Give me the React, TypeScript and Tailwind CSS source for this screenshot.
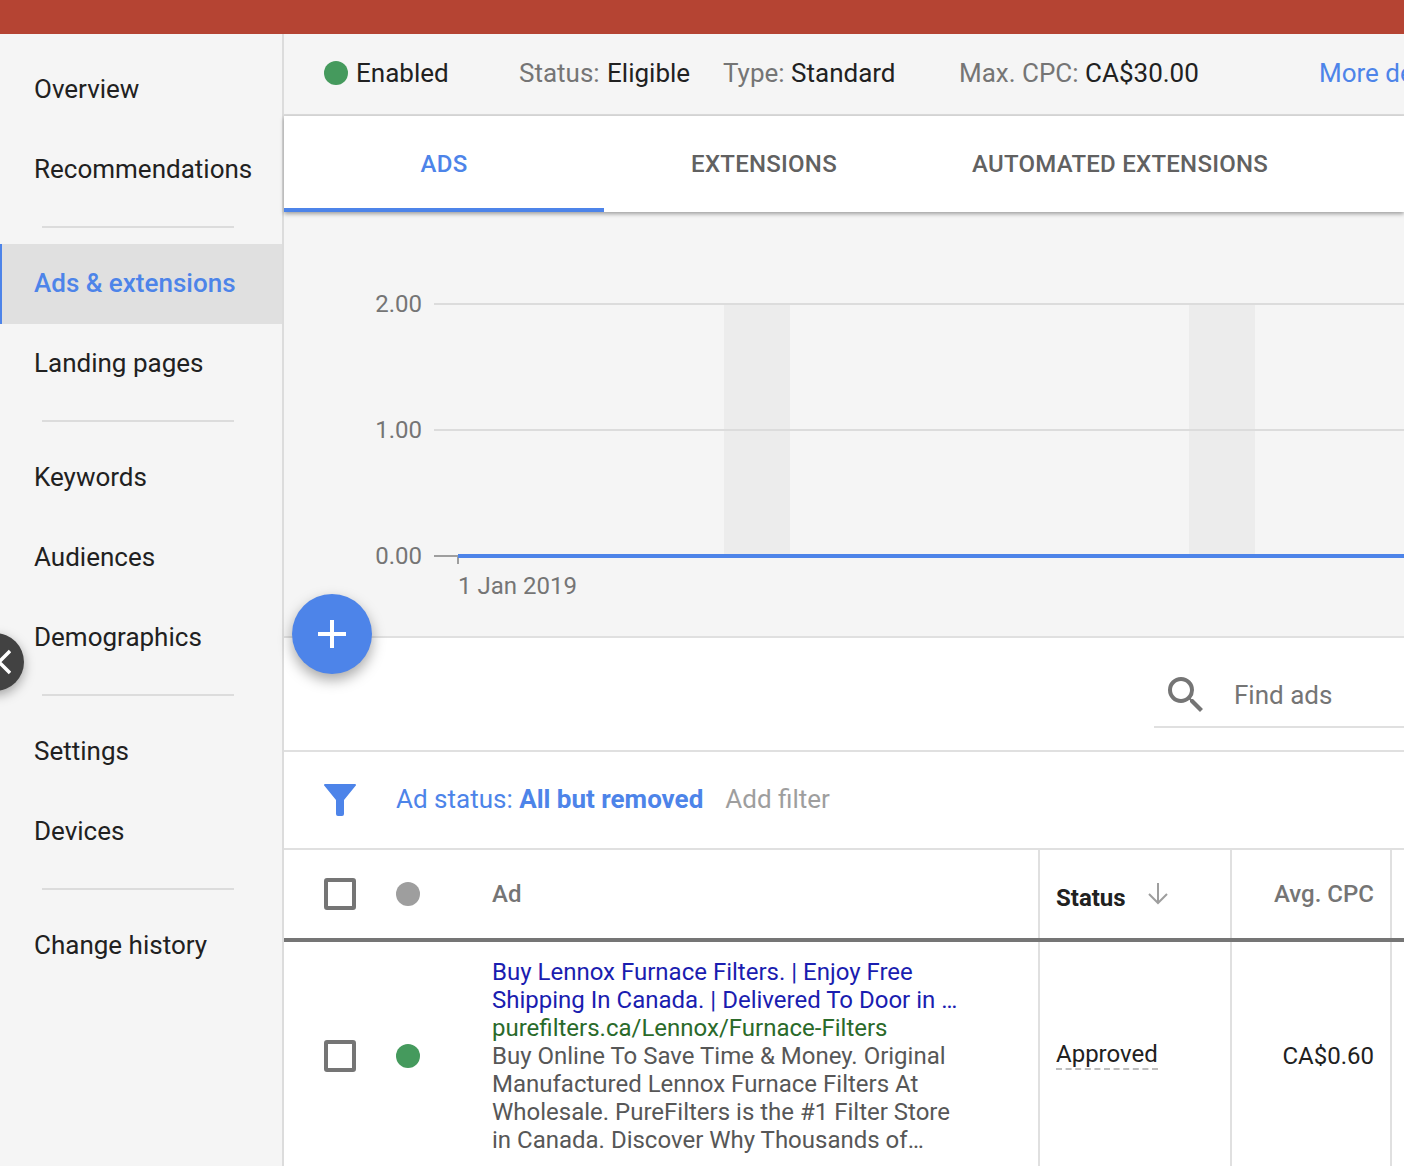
const navGroups = [
  ['Overview', 'Recommendations'],
  ['Ads & extensions', 'Landing pages'],
  ['Keywords', 'Audiences', 'Demographics'],
  ['Settings', 'Devices'],
  ['Change history'],
];

function Sidebar() {
  return (
    <aside className="w-[284px] shrink-0 border-r-2 border-[#dcdcdc] bg-[#f5f5f5] pt-[15px]">
      {navGroups.map((group, i) => (
        <div key={i} className="flex flex-col">
          {group.map((item) => {
            const active = item === 'Ads & extensions';
            return (
              <div
                key={item}
                className={
                  active
                    ? 'mt-px -mb-px flex h-20 items-center border-l-2 border-[#4d84e9] bg-[#e0e0e0] pb-[2px] pl-[32px] font-medium text-[#4d84e9]'
                    : 'flex h-20 items-center pl-[34px] text-[#212121]'
                }
              >
                {item}
              </div>
            );
          })}
          {i < navGroups.length - 1 && (
            <div className="mx-[42px] mb-[15px] mt-[17px] h-[2px] w-[192px] bg-[#dcdcdc]" />
          )}
        </div>
      ))}
    </aside>
  );
}

function StatusBar() {
  return (
    <div className="flex h-[82px] shrink-0 items-center whitespace-nowrap border-b-2 border-[#dcdcdc] pb-[2px] pl-10">
      <span className="h-6 w-6 shrink-0 rounded-full bg-[#459a5d]" />
      <span className="ml-[8px] w-[163px] shrink-0 text-[#212121]">Enabled</span>
      <span className="w-[204px] shrink-0 text-[#757575]">
        Status: <span className="ml-px text-[#212121]">Eligible</span>
      </span>
      <span className="w-[236px] shrink-0 text-[#757575]">
        Type: <span className="text-[#212121]">Standard</span>
      </span>
      <span className="w-[360px] shrink-0 text-[#757575]">
        Max. CPC: <span className="text-[#212121]">CA$30.00</span>
      </span>
      <span className="shrink-0 text-[#4d84e9]">More details</span>
    </div>
  );
}

function Tabs() {
  return (
    <div className="relative z-10 flex h-24 shrink-0 bg-white text-[24px] font-medium tracking-[0.25px] text-[#616161] shadow-[0_2px_4px_rgba(0,0,0,0.35)]">
      <div className="flex w-80 items-center justify-center border-b-4 border-[#4d84e9] pt-1 text-[#4d84e9]">
        ADS
      </div>
      <div className="flex w-80 items-center justify-center border-b-4 border-transparent pt-1">
        EXTENSIONS
      </div>
      <div className="flex items-center justify-center border-b-4 border-transparent px-12 pt-1">
        AUTOMATED EXTENSIONS
      </div>
    </div>
  );
}

function Chart() {
  return (
    <div className="h-[426px] shrink-0 border-b-2 border-[#e0e0e0]">
      <svg width="1120" height="424" className="block">
        <rect x="440" y="92" width="66" height="252" fill="#ececec" />
        <rect x="905" y="92" width="66" height="252" fill="#ececec" />
        <line x1="150" y1="92" x2="1120" y2="92" stroke="#dcdcdc" strokeWidth="2" />
        <line x1="150" y1="218" x2="1120" y2="218" stroke="#dcdcdc" strokeWidth="2" />
        <line x1="150" y1="344" x2="174" y2="344" stroke="#9e9e9e" strokeWidth="2" />
        <line x1="174" y1="344" x2="174" y2="352" stroke="#9e9e9e" strokeWidth="2" />
        <line x1="174" y1="344" x2="1120" y2="344" stroke="#4d84e9" strokeWidth="4" />
        <g fontFamily="Roboto, sans-serif" fontSize="24" fill="#757575">
          <text x="138" y="100" textAnchor="end">2.00</text>
          <text x="138" y="226" textAnchor="end">1.00</text>
          <text x="138" y="352" textAnchor="end">0.00</text>
          <text x="174" y="382">1 Jan 2019</text>
        </g>
      </svg>
    </div>
  );
}

function SearchRow() {
  return (
    <div className="flex h-[114px] shrink-0 justify-end border-b-2 border-[#e0e0e0] bg-white">
      <div className="mt-[22px] flex h-[68px] w-[250px] items-center border-b-2 border-[#e0e0e0] pl-[8px] pt-1">
        <svg width="48" height="48" viewBox="0 0 24 24" fill="#757575" className="shrink-0">
          <path d="M15.5 14h-.79l-.28-.27A6.471 6.471 0 0 0 16 9.5 6.5 6.5 0 1 0 9.5 16c1.61 0 3.09-.59 4.23-1.57l.27.28v.79l5 4.99L20.49 19l-4.99-5zm-6 0C7.01 14 5 11.99 5 9.5S7.01 5 9.5 5 14 7.01 14 9.5 11.99 14 9.5 14z" />
        </svg>
        <span className="ml-[24px] text-[#757575]">Find ads</span>
      </div>
    </div>
  );
}

function FilterRow() {
  return (
    <div className="flex h-[98px] shrink-0 items-center whitespace-nowrap border-b-2 border-[#e0e0e0] bg-white pb-[2px] pl-10">
      <svg width="32" height="32" viewBox="0 0 32 32" className="mt-[2px]">
        <path
          d="M1 0h30a1 1 0 0 1 .8 1.6L20 16v14a2 2 0 0 1-2 2h-4a2 2 0 0 1-2-2V16L.2 1.6A1 1 0 0 1 1 0z"
          fill="#4d84e9"
        />
      </svg>
      <span className="ml-10 text-[#4d84e9]">
        Ad status: <span className="font-bold">All but removed</span>
      </span>
      <span className="ml-[22px] text-[#9e9e9e]">Add filter</span>
    </div>
  );
}

function Checkbox() {
  return <span className="h-8 w-8 rounded-[3px] border-4 border-[#757575]" />;
}

function AdsTable() {
  return (
    <div className="min-h-0 flex-1 bg-white">
      <div className="flex h-[92px] border-b-4 border-[#757575] text-[24px] font-medium text-[#757575]">
        <div className="flex w-[754px] shrink-0 items-center pl-10">
          <Checkbox />
          <span className="ml-10 h-6 w-6 rounded-full bg-[#9e9e9e]" />
          <span className="ml-[72px]">Ad</span>
        </div>
        <div className="flex w-[192px] shrink-0 items-center border-l-2 border-[#e0e0e0] pl-4 pt-2 text-[#212121]">
          <span className="font-bold">Status</span>
          <svg width="24" height="24" viewBox="0 0 24 24" fill="none" stroke="#9e9e9e" strokeWidth="2" className="mb-[10px] ml-5">
            <path d="M12 2v20M3 13l9 9 9-9" />
          </svg>
        </div>
        <div className="flex w-[160px] shrink-0 items-center justify-end border-l-2 border-[#e0e0e0] pr-4">
          Avg. CPC
        </div>
        <div className="flex-1 border-l-2 border-[#e0e0e0]" />
      </div>
      <div className="flex h-[240px]">
        <div className="flex w-[754px] shrink-0 items-center pl-10">
          <div className="mt-[-12px] flex items-center">
            <Checkbox />
            <span className="ml-10 h-6 w-6 rounded-full bg-[#459a5d]" />
          </div>
          <div className="ml-[72px] mt-[-12px] w-[480px] whitespace-nowrap text-[24px] leading-[28px] text-[#575757]">
            <div className="text-[#1a1db0]">Buy Lennox Furnace Filters. | Enjoy Free</div>
            <div className="text-[#1a1db0]">Shipping In Canada. | Delivered To Door in …</div>
            <div className="text-[#2a6a2a]">purefilters.ca/Lennox/Furnace-Filters</div>
            <div>Buy Online To Save Time &amp; Money. Original</div>
            <div>Manufactured Lennox Furnace Filters At</div>
            <div>Wholesale. PureFilters is the #1 Filter Store</div>
            <div>in Canada. Discover Why Thousands of…</div>
          </div>
        </div>
        <div className="w-[192px] shrink-0 border-l-2 border-[#e0e0e0] pl-4 pt-[94px] text-[24px] text-[#212121]">
          <span className="border-b-2 border-dashed border-[#bdbdbd]">Approved</span>
        </div>
        <div className="w-[160px] shrink-0 border-l-2 border-[#e0e0e0] pr-4 pt-[96px] text-right text-[24px] text-[#212121]">
          CA$0.60
        </div>
        <div className="flex-1 border-l-2 border-[#e0e0e0]" />
      </div>
    </div>
  );
}

export default function App() {
  return (
    <div className="relative flex h-[1166px] w-[1404px] flex-col overflow-hidden bg-[#f5f5f5] font-['Roboto',sans-serif] text-[26px]">
      <div className="h-[34px] shrink-0 bg-[#b54433]" />
      <div className="flex min-h-0 flex-1">
        <Sidebar />
        <main className="flex min-w-0 flex-1 flex-col">
          <StatusBar />
          <Tabs />
          <Chart />
          <SearchRow />
          <FilterRow />
          <AdsTable />
        </main>
      </div>
      <button className="absolute left-[292px] top-[594px] z-20 flex h-20 w-20 items-center justify-center rounded-full bg-[#4d84e9] shadow-[0_6px_14px_rgba(0,0,0,0.35)]">
        <svg width="28" height="28" viewBox="0 0 28 28" stroke="white" strokeWidth="4">
          <path d="M14 0v28M0 14h28" />
        </svg>
      </button>
      <button className="absolute left-[-34px] top-[633px] z-20 flex h-[58px] w-[58px] items-center justify-end rounded-full bg-[#424242] pr-[13px] shadow-[0_4px_12px_rgba(0,0,0,0.35)]">
        <svg width="14" height="26" viewBox="0 0 14 26" fill="none" stroke="white" strokeWidth="3.5">
          <path d="M13 2L2 13l11 11" />
        </svg>
      </button>
    </div>
  );
}
